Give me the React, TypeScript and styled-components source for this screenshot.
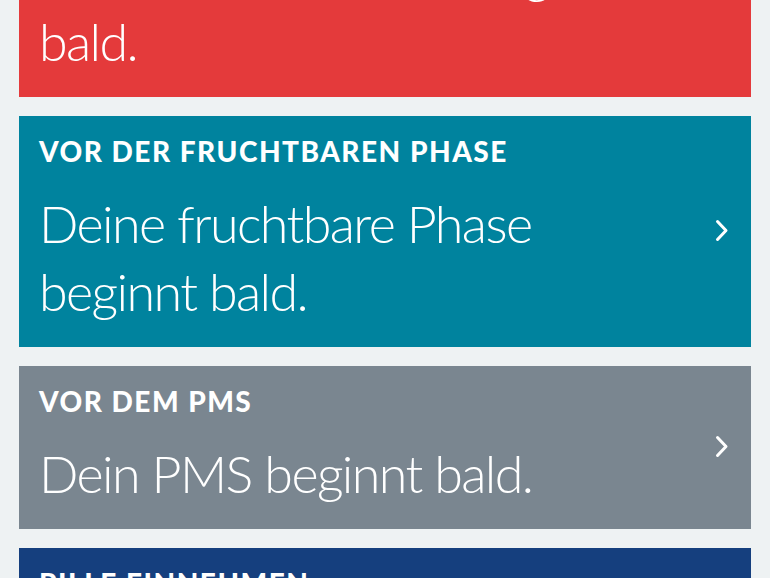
import styled, { createGlobalStyle } from "styled-components";

const GlobalStyle = createGlobalStyle`
  html, body {
    margin: 0;
    padding: 0;
    background: #eef2f3;
    font-family: Lato, "Open Sans", sans-serif;
    overflow: hidden;
  }
`;

type Reminder = {
  title: string;
  text: string;
  color: string;
};

const reminders: Reminder[] = [
  {
    title: "Vor der Periode",
    text: "Deine Menstruation beginnt bald.",
    color: "#e43a3b",
  },
  {
    title: "Vor der fruchtbaren Phase",
    text: "Deine fruchtbare Phase beginnt bald.",
    color: "#00839e",
  },
  {
    title: "Vor dem PMS",
    text: "Dein PMS beginnt bald.",
    color: "#7a8690",
  },
  {
    title: "Pille einnehmen",
    text: "Zeit für deine Pille.",
    color: "#153f7e",
  },
];

const Chevron = () => (
  <svg width="14" height="23" viewBox="0 0 14 23" fill="none">
    <path
      d="M2.5 2.5 L11 11.5 L2.5 20.5"
      stroke="#fff"
      strokeWidth="3"
      strokeLinecap="round"
      strokeLinejoin="round"
    />
  </svg>
);

const App = () => {
  return (
    <>
      <GlobalStyle />
      <Page>
        <List>
          {reminders.map((r) => (
            <Card key={r.title} $color={r.color}>
              <div className="content">
                <Title>{r.title}</Title>
                <Text>{r.text}</Text>
              </div>
              <Arrow>
                <Chevron />
              </Arrow>
            </Card>
          ))}
        </List>
      </Page>
    </>
  );
};

const Page = styled.div`
  padding: 0 19px;
  height: 578px;
  overflow: hidden;
`;

const List = styled.div`
  display: flex;
  flex-direction: column;
  gap: 19px;
  margin-top: -134px;
`;

const Card = styled.div<{ $color: string }>`
  background-color: ${(p) => p.$color};
  color: #fff;
  display: flex;
  flex-direction: row;
  align-items: center;
  padding: 20px 22px 22px 20px;

  .content {
    flex: 1;
    min-width: 0;
    padding-right: 20px;
  }
`;

const Title = styled.h5`
  margin: 0 0 23px;
  font-size: 28px;
  line-height: 30px;
  font-weight: 900;
  text-transform: uppercase;
  letter-spacing: 1.5px;
`;

const Text = styled.p`
  margin: 0;
  font-size: 52px;
  line-height: 68px;
  font-weight: 300;
  letter-spacing: -1.6px;
`;

const Arrow = styled.div`
  display: flex;
  align-items: center;
  justify-content: center;
  width: 14px;
`;

export default App;
